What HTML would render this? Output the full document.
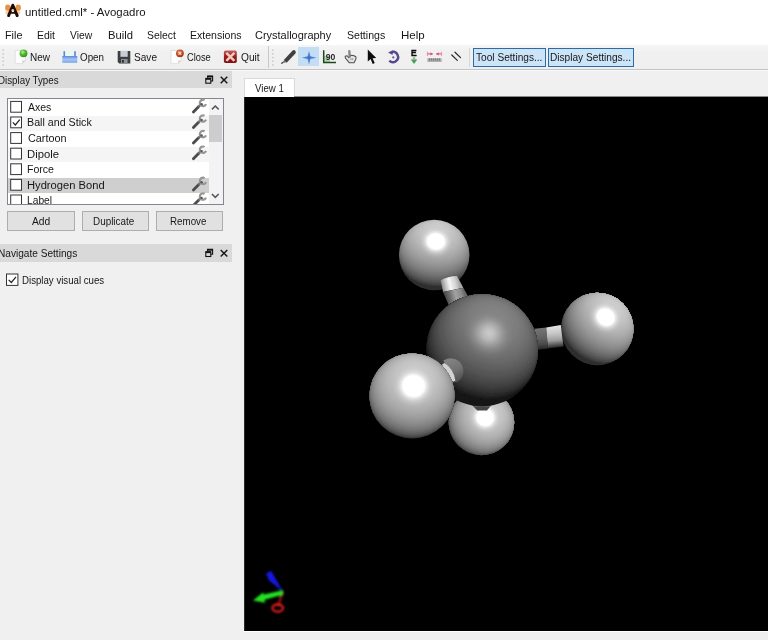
<!DOCTYPE html>
<html>
<head>
<meta charset="utf-8">
<title>untitled.cml* - Avogadro</title>
<style>
html,body{margin:0;padding:0;}
body{width:768px;height:640px;overflow:hidden;background:#f0f0f0;position:relative;font-family:"Liberation Sans",sans-serif;font-size:10px;color:#000;}
.abs{position:absolute;}
.t{position:absolute;white-space:nowrap;line-height:1;transform-origin:0 0;}
#top{left:0;top:0;width:768px;height:45px;background:#fff;}
#toolbar{left:0;top:45px;width:768px;height:24px;background:linear-gradient(#f6f6f6,#f0f0f0 30%,#efefef);border-bottom:1px solid #c4c4c4;}
.dock{left:0;width:232px;background:#d9d9d9;}
#list{left:7px;top:98px;width:215px;height:105px;background:#fff;border:1px solid #82878f;overflow:hidden;}
.row{position:absolute;left:0;width:201px;}
.cb{position:absolute;width:10px;height:10px;border:1px solid #333;background:#fff;}
.btn{position:absolute;top:211px;height:17.5px;background:#e1e1e1;border:1px solid #adadad;}
#gl{left:244px;top:97px;width:524px;height:534px;background:#000;border-left:1px solid #2a2a2a;box-sizing:border-box;}
.tsel{position:absolute;top:48px;height:16.8px;background:#cce4f7;border:1px solid #2c6ca6;box-sizing:content-box;}
</style>
</head>
<body>
<div id="top" class="abs"></div>
<div id="toolbar" class="abs"></div>
<div class="abs" style="left:0;top:70px;width:768px;height:1px;background:#f8f8f8;"></div>

<!-- dock titles -->
<div class="abs dock" style="top:70.5px;height:17px;"></div>
<div class="abs dock" style="top:244px;height:17.5px;"></div>

<!-- list -->
<div id="list" class="abs">
  <div class="row" style="top:16.5px;height:15.6px;background:#f5f5f5;"></div>
  <div class="row" style="top:47.7px;height:15.6px;background:#f5f5f5;"></div>
  <div class="row" style="top:78.9px;height:15.6px;background:#cfcfcf;"></div>
  <div class="abs" style="left:200.5px;top:0;width:14.5px;height:105px;background:#f3f3f3;"></div>
  <div class="abs" style="left:200.5px;top:16px;width:13.5px;height:27.2px;background:#cdcdcd;"></div>
</div>
<div class="btn" style="left:7px;width:65.5px;"></div>
<div class="btn" style="left:82px;width:65px;"></div>
<div class="btn" style="left:156px;width:65px;"></div>

<!-- tab + gl -->
<div class="abs" style="left:244px;top:78px;width:49px;height:19px;background:#fff;border:1px solid #d9d9d9;border-bottom:none;"></div>
<div class="abs" style="left:294px;top:96px;width:474px;height:1px;background:#8a8a8a;"></div>
<div id="gl" class="abs"></div>
<div class="abs" style="left:244px;top:631px;width:524px;height:1px;background:#fff;"></div>

<!-- tool buttons -->
<div class="abs" style="left:298px;top:47px;width:21px;height:19px;background:#c3ddf4;"></div>
<div class="tsel" style="left:473px;width:70.8px;"></div>
<div class="tsel" style="left:548px;width:83.6px;"></div>
<div class="abs" style="left:267.5px;top:46px;width:1px;height:22px;background:#c8c8c8;"></div>
<div class="abs" style="left:469px;top:48px;width:1px;height:19px;background:#d8d8d8;"></div>
<svg class="abs" style="left:0;top:0;" width="768" height="320" viewBox="0 0 768 320">
<defs>
  <radialGradient id="gball" cx="0.4" cy="0.35" r="0.7"><stop offset="0" stop-color="#b8f08a"/><stop offset="0.45" stop-color="#4fc02f"/><stop offset="1" stop-color="#2f8a1c"/></radialGradient>
  <radialGradient id="rball" cx="0.4" cy="0.35" r="0.7"><stop offset="0" stop-color="#e88a60"/><stop offset="0.5" stop-color="#c4502a"/><stop offset="1" stop-color="#9a3516"/></radialGradient>
  <linearGradient id="quitg" x1="0" y1="0" x2="0" y2="1"><stop offset="0" stop-color="#c86060"/><stop offset="0.45" stop-color="#9c2020"/><stop offset="1" stop-color="#7c0e0e"/></linearGradient>
  <linearGradient id="openg" x1="0" y1="0" x2="0" y2="1"><stop offset="0" stop-color="#5688d8"/><stop offset="0.3" stop-color="#86b0ee"/><stop offset="0.55" stop-color="#a2c4f6"/><stop offset="1" stop-color="#78a4e8"/></linearGradient>
  <filter id="b3" x="-20%" y="-20%" width="140%" height="140%"><feGaussianBlur stdDeviation="0.35"/></filter>
  <filter id="b5" x="-20%" y="-20%" width="140%" height="140%"><feGaussianBlur stdDeviation="0.5"/></filter>
  <filter id="b6" x="-20%" y="-20%" width="140%" height="140%"><feGaussianBlur stdDeviation="0.6"/></filter>
</defs>

<!-- app icon -->
<g filter="url(#b6)">
  <ellipse cx="7.8" cy="7.8" rx="2.7" ry="3.3" fill="#e89444"/>
  <ellipse cx="18.2" cy="7.8" rx="2.7" ry="3.3" fill="#e89444"/>
  <ellipse cx="7.2" cy="12.6" rx="1.8" ry="2" fill="#f6cfa6"/>
  <ellipse cx="18.6" cy="12.6" rx="1.8" ry="2" fill="#f6cfa6"/>
  <path d="M9.6 9.5 L12.8 5 L16 9.5 Z" fill="#8a4a20"/>
  <path d="M8.6 15.6 L12.8 5.2 L17.2 15.6" fill="none" stroke="#1c0c06" stroke-width="2.9" stroke-linejoin="round" stroke-linecap="round"/>
  <path d="M10 12.9 H15.6" stroke="#1c0c06" stroke-width="1.7"/>
  <circle cx="12.8" cy="10.2" r="1.3" fill="#f4c8a4"/>
</g>

<!-- toolbar handles -->
<g fill="#bdbdbd">
  <rect x="2.5" y="49.5" width="1.3" height="1.3"/><rect x="2.5" y="53.2" width="1.3" height="1.3"/><rect x="2.5" y="56.9" width="1.3" height="1.3"/><rect x="2.5" y="60.6" width="1.3" height="1.3"/><rect x="2.5" y="64.3" width="1.3" height="1.3"/>
  <rect x="272.2" y="49.5" width="1.3" height="1.3"/><rect x="272.2" y="53.2" width="1.3" height="1.3"/><rect x="272.2" y="56.9" width="1.3" height="1.3"/><rect x="272.2" y="60.6" width="1.3" height="1.3"/><rect x="272.2" y="64.3" width="1.3" height="1.3"/>
</g>

<!-- New -->
<g filter="url(#b3)">
  <path d="M15.2 50.4 H25.5 V60.5 L22.3 63.6 H15.2 Z" fill="#fdfdfd" stroke="#dadada" stroke-width="0.8"/>
  <path d="M25.5 60.5 L22.3 63.6 V60.5 Z" fill="#cfcfcf"/>
  <circle cx="23.5" cy="53.3" r="3.9" fill="url(#gball)"/>
</g>
<!-- Open -->
<g filter="url(#b3)">
  <rect x="65" y="50.4" width="9.3" height="5.9" fill="#eaf6fa"/>
  <rect x="67.5" y="51.5" width="3.5" height="3" fill="#f4f6d8" opacity="0.8"/>
  <rect x="63.5" y="51.2" width="1.6" height="5.2" fill="#5f86cc"/>
  <rect x="74.2" y="51.2" width="1.6" height="5.2" fill="#5f86cc"/>
  <rect x="62.3" y="56" width="15" height="6.8" fill="url(#openg)"/>
</g>
<!-- Save -->
<g filter="url(#b3)">
  <path d="M117.7 50.9 H130.3 V63.4 H119.2 L117.7 61.9 Z" fill="#3e4042"/>
  <rect x="120.4" y="50.9" width="7.3" height="5.9" fill="#c9ced6"/>
  <rect x="121" y="59" width="6.6" height="4.4" fill="#8d9094"/>
  <rect x="122" y="60" width="1.8" height="2.6" fill="#2c2c2c"/>
</g>
<!-- Close -->
<g filter="url(#b3)">
  <path d="M171 50.4 H181.3 V60.5 L178.1 63.6 H171 Z" fill="#fdfdfd" stroke="#dadada" stroke-width="0.8"/>
  <path d="M181.3 60.5 L178.1 63.6 V60.5 Z" fill="#d8cfc0"/>
  <circle cx="179.9" cy="53.3" r="3.9" fill="url(#rball)"/>
  <path d="M178.5 51.9 L181.3 54.7 M181.3 51.9 L178.5 54.7" stroke="#f6ddd0" stroke-width="1.2"/>
</g>
<!-- Quit -->
<g filter="url(#b3)">
  <rect x="223.9" y="50.4" width="12.9" height="12.7" rx="1.8" fill="url(#quitg)"/>
  <path d="M226.3 52.8 L234.4 60.8 M234.4 52.8 L226.3 60.8" stroke="#f0cac2" stroke-width="2.4"/>
</g>

<!-- Pencil (draw tool) -->
<g filter="url(#b3)">
  <path d="M283.8 60 L292.2 50.9 Q293.8 49.4 295.3 50.8 Q296.6 52.2 295.2 53.8 L286.6 62.7 Z" fill="#404040"/>
  <path d="M284.2 60.3 L286.2 62.3 L281.6 63.2 Z" fill="#6a6a6a"/>
  <path d="M282.6 62.4 L281.4 63.3 L282.9 63" stroke="#222" stroke-width="0.8" fill="#222"/>
</g>
<!-- Navigate star -->
<g filter="url(#b3)">
  <path d="M309 51 L310.4 56.3 L316.4 57.7 L310.4 59.1 L309 64.4 L307.6 59.1 L301.9 57.7 L307.6 56.3 Z" fill="#4d84d6"/>
  <circle cx="309" cy="57.7" r="1.6" fill="#3f73c8"/>
</g>
<!-- Measure L90 -->
<g filter="url(#b3)">
  <path d="M324.2 56 H330 V62 H324.2 Z" fill="#9fd0a0" opacity="0.8"/>
  <path d="M323.7 50.3 V62.6 H336" fill="none" stroke="#1d4a1d" stroke-width="1.5"/>
  <text x="325.7" y="60.3" font-family="Liberation Sans, sans-serif" font-size="8.6" font-weight="bold" fill="#2a2a2a" textLength="9.6" lengthAdjust="spacingAndGlyphs">90</text>
</g>
<!-- Hand -->
<g filter="url(#b3)">
  <path d="M345.2 56.6 Q346.4 55 348 56.6 L349 57.6 L350.6 55.2 L353.2 55.5 L355.7 56.6 Q356.5 58 355.6 59.8 L354 62.7 H349.2 L345.4 58 Z" fill="#e2e2e2" stroke="#505050" stroke-width="1.1" stroke-linejoin="round"/>
  <path d="M349.3 51.2 L349.7 56.6" stroke="#858585" stroke-width="2.3" stroke-linecap="round"/>
  <path d="M351 58.4 V60 M352.6 58.4 V60" stroke="#7a7a7a" stroke-width="0.8"/>
</g>
<!-- Arrow cursor -->
<g filter="url(#b3)">
  <path d="M367.8 49.6 V61.6 L370.6 59 L372.7 64 L374.7 63.1 L372.6 58.3 L376.2 58.1 Z" fill="#0a0a0a"/>
</g>
<!-- Rotate -->
<g filter="url(#b3)">
  <path d="M391.5 52.1 A5.1 5.1 0 1 1 389.3 60.6" fill="none" stroke="#58488e" stroke-width="2.4"/>
  <path d="M388 52.6 L393 50.2 L392.6 54.9 Z" fill="#58488e"/>
  <circle cx="393.3" cy="57.4" r="1.1" fill="#62539a"/>
</g>
<!-- E optimise -->
<g filter="url(#b3)">
  <text x="411" y="55.9" font-family="Liberation Sans, sans-serif" font-size="8.2" font-weight="bold" fill="#0c0c0c" stroke="#0c0c0c" stroke-width="0.45" textLength="5.6" lengthAdjust="spacingAndGlyphs">E</text>
  <path d="M412.9 57.4 H415.2 V59.6 H417.3 L414.05 63.9 L410.8 59.6 H412.9 Z" fill="#4a9e58"/>
  <path d="M413.3 58 H414.8 V60 H413.3 Z" fill="#8fd09a"/>
</g>
<!-- Align / measure -->
<g filter="url(#b3)">
  <path d="M427.2 53.9 H441.8" stroke="#e4698a" stroke-width="1.1" stroke-dasharray="5.6 3.4"/>
  <path d="M430.4 52.3 L432.8 53.9 L430.4 55.5 Z M438.6 52.3 L436.2 53.9 L438.6 55.5 Z" fill="#de4a70"/>
  <path d="M427.4 51.7 V56.1 M441.6 51.7 V56.1" stroke="#ea8aa4" stroke-width="0.9"/>
  <rect x="427.4" y="58.3" width="14.2" height="3.6" fill="#a9a9a9"/>
  <path d="M429.4 58.3 V60.6 M431.4 58.3 V60.6 M433.4 58.3 V60.6 M435.4 58.3 V60.6 M437.4 58.3 V60.6 M439.4 58.3 V60.6" stroke="#6c6c6c" stroke-width="0.8"/>
</g>
<!-- two lines -->
<g filter="url(#b3)">
  <path d="M451.8 55 L457.3 60.4 M455 52.2 L460.5 57.6" stroke="#2c2c2c" stroke-width="1.25" stroke-linecap="round"/>
</g>

<!-- dock title buttons -->
<g fill="none" stroke="#111" stroke-width="1.1">
  <path d="M207.6 77.8 V76 H212.6 V81 H210.8"/>
  <path d="M207.6 76.6 H212.6" stroke-width="1.6"/>
  <rect x="205.8" y="78.4" width="5" height="4.8"/>
  <path d="M205.8 79 H210.8" stroke-width="1.6"/>
  <path d="M220.7 76.7 L227.3 83.2 M227.3 76.7 L220.7 83.2" stroke-width="1.4"/>
</g>
<g fill="none" stroke="#111" stroke-width="1.1" transform="translate(0,173.3)">
  <path d="M207.6 77.8 V76 H212.6 V81 H210.8"/>
  <path d="M207.6 76.6 H212.6" stroke-width="1.6"/>
  <rect x="205.8" y="78.4" width="5" height="4.8"/>
  <path d="M205.8 79 H210.8" stroke-width="1.6"/>
  <path d="M220.7 76.7 L227.3 83.2 M227.3 76.7 L220.7 83.2" stroke-width="1.4"/>
</g>

<!-- scrollbar arrows -->
<path d="M211.9 109.4 L215.3 106 L218.7 109.4" fill="none" stroke="#555" stroke-width="1.5"/>
<path d="M211.9 194 L215.3 197.4 L218.7 194" fill="none" stroke="#555" stroke-width="1.5"/>

<!-- checkboxes -->
<g fill="#fff" stroke="#333" stroke-width="1">
  <rect x="10.7" y="101.4" width="10.8" height="10.8"/>
  <rect x="10.7" y="117" width="10.8" height="10.8"/>
  <rect x="10.7" y="132.6" width="10.8" height="10.8"/>
  <rect x="10.7" y="148.2" width="10.8" height="10.8"/>
  <rect x="10.7" y="163.8" width="10.8" height="10.8"/>
  <rect x="10.7" y="179.4" width="10.8" height="10.8"/>
  <rect x="10.7" y="195" width="10.8" height="10.8"/>
  <rect x="6.5" y="274" width="11.4" height="11.4"/>
</g>
<path d="M12.8 122.4 L15.3 125 L19.8 119.6" fill="none" stroke="#222" stroke-width="1.2"/>
<path d="M8.7 279.8 L11.3 282.5 L16 276.9" fill="none" stroke="#222" stroke-width="1.2"/>

<!-- wrenches -->
<defs>
<g id="wr">
  <path d="M1.4 10.6 L6.3 5.6" stroke="#4c4c4c" stroke-width="2.8" stroke-linecap="round"/>
  <path d="M6.3 5.6 L8.4 3.6" stroke="#6e6e6e" stroke-width="2.6"/>
  <path d="M12.6 -1.2 A3.2 3.2 0 1 0 14 2.8" fill="none" stroke="#969696" stroke-width="2.2"/>
  <circle cx="9.6" cy="3" r="1.2" fill="#555"/>
</g>
</defs>
<g filter="url(#b5)">
<use href="#wr" x="192" y="101.3"/>
<use href="#wr" x="192" y="116.9"/>
<use href="#wr" x="192" y="132.5"/>
<use href="#wr" x="192" y="148.1"/>
<use href="#wr" x="192" y="179.3"/>
<use href="#wr" x="192" y="194.9"/>
</g>
</svg>
<svg class="abs" style="left:244px;top:97px;" width="524" height="534" viewBox="244 97 524 534">
<defs>
<radialGradient id="gh1" gradientUnits="userSpaceOnUse" cx="436.0" cy="241.0" r="49.4"><stop offset="0" stop-color="#d6d6d6"/><stop offset="0.2" stop-color="#c2c2c2"/><stop offset="0.4" stop-color="#a8a8a8"/><stop offset="0.6" stop-color="#8a8a8a"/><stop offset="0.78" stop-color="#626262"/><stop offset="0.92" stop-color="#3e3e3e"/><stop offset="1" stop-color="#242424"/></radialGradient>
<radialGradient id="gh2" gradientUnits="userSpaceOnUse" cx="606.0" cy="316.8" r="51.2"><stop offset="0" stop-color="#d6d6d6"/><stop offset="0.2" stop-color="#c2c2c2"/><stop offset="0.4" stop-color="#a8a8a8"/><stop offset="0.6" stop-color="#8a8a8a"/><stop offset="0.78" stop-color="#626262"/><stop offset="0.92" stop-color="#3e3e3e"/><stop offset="1" stop-color="#242424"/></radialGradient>
<radialGradient id="gh3" gradientUnits="userSpaceOnUse" cx="413.7" cy="385.6" r="53.1"><stop offset="0" stop-color="#d6d6d6"/><stop offset="0.2" stop-color="#c2c2c2"/><stop offset="0.4" stop-color="#a8a8a8"/><stop offset="0.6" stop-color="#8a8a8a"/><stop offset="0.78" stop-color="#626262"/><stop offset="0.92" stop-color="#3e3e3e"/><stop offset="1" stop-color="#242424"/></radialGradient>
<radialGradient id="gh4" gradientUnits="userSpaceOnUse" cx="485.2" cy="417.2" r="39.2"><stop offset="0" stop-color="#d6d6d6"/><stop offset="0.2" stop-color="#c2c2c2"/><stop offset="0.4" stop-color="#a8a8a8"/><stop offset="0.6" stop-color="#8a8a8a"/><stop offset="0.78" stop-color="#626262"/><stop offset="0.92" stop-color="#3e3e3e"/><stop offset="1" stop-color="#242424"/></radialGradient>
<radialGradient id="gc" gradientUnits="userSpaceOnUse" cx="489.0" cy="333.4" r="74.3"><stop offset="0" stop-color="#b2b2b2"/><stop offset="0.07" stop-color="#aaaaaa"/><stop offset="0.15" stop-color="#929292"/><stop offset="0.24" stop-color="#7c7c7c"/><stop offset="0.34" stop-color="#6e6e6e"/><stop offset="0.5" stop-color="#5e5e5e"/><stop offset="0.68" stop-color="#4a4a4a"/><stop offset="0.85" stop-color="#363636"/><stop offset="0.95" stop-color="#282828"/><stop offset="1" stop-color="#1c1c1c"/></radialGradient>

  <radialGradient id="sp"><stop offset="0" stop-color="#fff" stop-opacity="1"/><stop offset="0.5" stop-color="#fff" stop-opacity="0.96"/><stop offset="0.72" stop-color="#fff" stop-opacity="0.5"/><stop offset="1" stop-color="#fff" stop-opacity="0"/></radialGradient>
  <linearGradient id="b1L" gradientUnits="userSpaceOnUse" x1="440.6" y1="284" x2="458.5" y2="280"><stop offset="0" stop-color="#7c7c7c"/><stop offset="0.2" stop-color="#b8b8b8"/><stop offset="0.48" stop-color="#f6f6f6"/><stop offset="0.8" stop-color="#d2d2d2"/><stop offset="1" stop-color="#a8a8a8"/></linearGradient>
  <linearGradient id="b1D" gradientUnits="userSpaceOnUse" x1="445" y1="297" x2="464" y2="292"><stop offset="0" stop-color="#484848"/><stop offset="0.25" stop-color="#6c6c6c"/><stop offset="0.55" stop-color="#a2a2a2"/><stop offset="0.85" stop-color="#8a8a8a"/><stop offset="1" stop-color="#6a6a6a"/></linearGradient>
  <linearGradient id="b2L" gradientUnits="userSpaceOnUse" x1="555" y1="326" x2="557" y2="348"><stop offset="0" stop-color="#e4e4e4"/><stop offset="0.35" stop-color="#c4c4c4"/><stop offset="0.65" stop-color="#9c9c9c"/><stop offset="0.88" stop-color="#4c4c4c"/><stop offset="1" stop-color="#1c1c1c"/></linearGradient>
  <linearGradient id="b2D" gradientUnits="userSpaceOnUse" x1="540" y1="328" x2="542" y2="350.5"><stop offset="0" stop-color="#747474"/><stop offset="0.4" stop-color="#646464"/><stop offset="0.7" stop-color="#4c4c4c"/><stop offset="1" stop-color="#1e1e1e"/></linearGradient>
  <linearGradient id="b3D" gradientUnits="userSpaceOnUse" x1="450" y1="360" x2="460" y2="380"><stop offset="0" stop-color="#828282"/><stop offset="0.5" stop-color="#727272"/><stop offset="1" stop-color="#505050"/></linearGradient>
  <filter id="ab" x="-20%" y="-20%" width="140%" height="140%"><feGaussianBlur stdDeviation="0.9"/></filter>
  <filter id="mb" x="-5%" y="-5%" width="110%" height="110%"><feGaussianBlur stdDeviation="0.55"/></filter>
</defs>
<g filter="url(#mb)">
  <!-- H4 (bottom, behind C) -->
  <clipPath id="cph4"><circle cx="481.4" cy="422.4" r="32.8"/></clipPath>
<g clip-path="url(#cph4)">
<circle cx="481.4" cy="422.4" r="33.8" fill="#2e2e2e"/>
<g transform="translate(481.4,422.4) rotate(-53.84)">
<ellipse cx="-4.42" cy="0" rx="28.36" ry="30.73" fill="#2e2e2e"/><rect x="-29.81" y="-33.8" width="64.61" height="67.6" fill="#2e2e2e"/>
<ellipse cx="-4.12" cy="0" rx="28.62" ry="31.01" fill="#343434"/><rect x="-27.76" y="-33.8" width="62.56" height="67.6" fill="#343434"/>
<ellipse cx="-3.81" cy="0" rx="28.86" ry="31.27" fill="#383838"/><rect x="-25.71" y="-33.8" width="60.51" height="67.6" fill="#383838"/>
<ellipse cx="-3.51" cy="0" rx="29.08" ry="31.51" fill="#3c3c3c"/><rect x="-23.65" y="-33.8" width="58.45" height="67.6" fill="#3c3c3c"/>
<ellipse cx="-3.20" cy="0" rx="29.28" ry="31.73" fill="#404040"/><rect x="-21.60" y="-33.8" width="56.40" height="67.6" fill="#404040"/>
<ellipse cx="-2.90" cy="0" rx="29.46" ry="31.92" fill="#444444"/><rect x="-19.55" y="-33.8" width="54.35" height="67.6" fill="#444444"/>
<ellipse cx="-2.59" cy="0" rx="29.63" ry="32.10" fill="#484848"/><rect x="-17.49" y="-33.8" width="52.29" height="67.6" fill="#484848"/>
<ellipse cx="-2.29" cy="0" rx="29.77" ry="32.26" fill="#4b4b4b"/><rect x="-15.44" y="-33.8" width="50.24" height="67.6" fill="#4b4b4b"/>
<ellipse cx="-1.98" cy="0" rx="29.89" ry="32.39" fill="#4e4e4e"/><rect x="-13.39" y="-33.8" width="48.19" height="67.6" fill="#4e4e4e"/>
<ellipse cx="-1.68" cy="0" rx="30.00" ry="32.51" fill="#525252"/><rect x="-11.33" y="-33.8" width="46.13" height="67.6" fill="#525252"/>
<ellipse cx="-1.38" cy="0" rx="30.09" ry="32.60" fill="#555555"/><rect x="-9.28" y="-33.8" width="44.08" height="67.6" fill="#555555"/>
<ellipse cx="-1.07" cy="0" rx="30.16" ry="32.68" fill="#585858"/><rect x="-7.23" y="-33.8" width="42.03" height="67.6" fill="#585858"/>
<ellipse cx="-0.77" cy="0" rx="30.21" ry="32.74" fill="#5b5b5b"/><rect x="-5.17" y="-33.8" width="39.97" height="67.6" fill="#5b5b5b"/>
<ellipse cx="-0.46" cy="0" rx="30.25" ry="32.78" fill="#5e5e5e"/><rect x="-3.12" y="-33.8" width="37.92" height="67.6" fill="#5e5e5e"/>
<ellipse cx="-0.16" cy="0" rx="30.27" ry="32.80" fill="#616161"/><rect x="-1.06" y="-33.8" width="35.86" height="67.6" fill="#616161"/>
<ellipse cx="0.15" cy="0" rx="30.27" ry="32.80" fill="#646464"/><rect x="0.99" y="-33.8" width="33.81" height="67.6" fill="#646464"/>
<ellipse cx="0.45" cy="0" rx="30.25" ry="32.78" fill="#676767"/><rect x="3.04" y="-33.8" width="31.76" height="67.6" fill="#676767"/>
<ellipse cx="0.76" cy="0" rx="30.22" ry="32.74" fill="#6a6a6a"/><rect x="5.10" y="-33.8" width="29.70" height="67.6" fill="#6a6a6a"/>
<ellipse cx="1.06" cy="0" rx="30.16" ry="32.68" fill="#6d6d6d"/><rect x="7.15" y="-33.8" width="27.65" height="67.6" fill="#6d6d6d"/>
<ellipse cx="1.36" cy="0" rx="30.09" ry="32.61" fill="#707070"/><rect x="9.20" y="-33.8" width="25.60" height="67.6" fill="#707070"/>
<ellipse cx="1.67" cy="0" rx="30.01" ry="32.51" fill="#737373"/><rect x="11.26" y="-33.8" width="23.54" height="67.6" fill="#737373"/>
<ellipse cx="1.97" cy="0" rx="29.90" ry="32.40" fill="#767676"/><rect x="13.31" y="-33.8" width="21.49" height="67.6" fill="#767676"/>
<ellipse cx="2.28" cy="0" rx="29.77" ry="32.26" fill="#797979"/><rect x="15.36" y="-33.8" width="19.44" height="67.6" fill="#797979"/>
<ellipse cx="2.58" cy="0" rx="29.63" ry="32.11" fill="#7b7b7b"/><rect x="17.42" y="-33.8" width="17.38" height="67.6" fill="#7b7b7b"/>
<ellipse cx="2.89" cy="0" rx="29.47" ry="31.93" fill="#7e7e7e"/><rect x="19.47" y="-33.8" width="15.33" height="67.6" fill="#7e7e7e"/>
<ellipse cx="3.19" cy="0" rx="29.29" ry="31.74" fill="#818181"/><rect x="21.52" y="-33.8" width="13.28" height="67.6" fill="#818181"/>
<ellipse cx="3.50" cy="0" rx="29.09" ry="31.52" fill="#848484"/><rect x="23.58" y="-33.8" width="11.22" height="67.6" fill="#848484"/>
<ellipse cx="3.80" cy="0" rx="28.87" ry="31.28" fill="#868686"/><rect x="25.63" y="-33.8" width="9.17" height="67.6" fill="#868686"/>
<ellipse cx="4.10" cy="0" rx="28.63" ry="31.02" fill="#898989"/><rect x="27.68" y="-33.8" width="7.12" height="67.6" fill="#898989"/>
<ellipse cx="4.41" cy="0" rx="28.37" ry="30.74" fill="#8c8c8c"/><rect x="29.74" y="-33.8" width="5.06" height="67.6" fill="#8c8c8c"/>
<ellipse cx="4.71" cy="0" rx="28.08" ry="30.43" fill="#8e8e8e"/><rect x="31.79" y="-33.8" width="3.01" height="67.6" fill="#8e8e8e"/>
<ellipse cx="5.02" cy="0" rx="27.78" ry="30.10" fill="#919191"/>
<ellipse cx="5.32" cy="0" rx="27.45" ry="29.75" fill="#939393"/>
<ellipse cx="5.63" cy="0" rx="27.10" ry="29.36" fill="#969696"/>
<ellipse cx="5.93" cy="0" rx="26.72" ry="28.96" fill="#999999"/>
<ellipse cx="6.24" cy="0" rx="26.32" ry="28.52" fill="#9b9b9b"/>
<ellipse cx="6.54" cy="0" rx="25.90" ry="28.06" fill="#9e9e9e"/>
<ellipse cx="6.85" cy="0" rx="25.44" ry="27.57" fill="#a0a0a0"/>
<ellipse cx="7.15" cy="0" rx="24.95" ry="27.04" fill="#a3a3a3"/>
<ellipse cx="7.45" cy="0" rx="24.44" ry="26.48" fill="#a5a5a5"/>
<ellipse cx="7.76" cy="0" rx="23.89" ry="25.88" fill="#a8a8a8"/>
<ellipse cx="8.06" cy="0" rx="23.30" ry="25.25" fill="#aaaaaa"/>
<ellipse cx="8.37" cy="0" rx="22.67" ry="24.57" fill="#adadad"/>
<ellipse cx="8.67" cy="0" rx="22.01" ry="23.85" fill="#afafaf"/>
<ellipse cx="8.98" cy="0" rx="21.29" ry="23.07" fill="#b2b2b2"/>
<ellipse cx="9.28" cy="0" rx="20.53" ry="22.25" fill="#b4b4b4"/>
<ellipse cx="9.59" cy="0" rx="19.71" ry="21.36" fill="#b7b7b7"/>
<ellipse cx="9.89" cy="0" rx="18.83" ry="20.40" fill="#b9b9b9"/>
<ellipse cx="10.19" cy="0" rx="17.87" ry="19.36" fill="#bbbbbb"/>
<ellipse cx="10.50" cy="0" rx="16.83" ry="18.23" fill="#bebebe"/>
<ellipse cx="10.80" cy="0" rx="15.68" ry="16.99" fill="#c0c0c0"/>
<ellipse cx="11.11" cy="0" rx="14.41" ry="15.61" fill="#c3c3c3"/>
<ellipse cx="11.41" cy="0" rx="12.97" ry="14.05" fill="#c5c5c5"/>
<ellipse cx="11.72" cy="0" rx="11.30" ry="12.25" fill="#c7c7c7"/>
<ellipse cx="12.02" cy="0" rx="9.29" ry="10.06" fill="#cacaca"/>
<ellipse cx="12.33" cy="0" rx="6.61" ry="7.16" fill="#cccccc"/>
<ellipse cx="12.63" cy="0" rx="0.01" ry="0.01" fill="#cfcfcf"/>
</g>
<g transform="translate(481.4,422.4) rotate(-53.84)">
<ellipse cx="5.32" cy="0" rx="18.16" ry="18.52" fill="#fff" fill-opacity="0.010"/>
<ellipse cx="5.40" cy="0" rx="17.49" ry="17.84" fill="#fff" fill-opacity="0.006"/>
<ellipse cx="5.49" cy="0" rx="16.81" ry="17.14" fill="#fff" fill-opacity="0.010"/>
<ellipse cx="5.57" cy="0" rx="16.12" ry="16.44" fill="#fff" fill-opacity="0.015"/>
<ellipse cx="5.65" cy="0" rx="15.42" ry="15.73" fill="#fff" fill-opacity="0.022"/>
<ellipse cx="5.73" cy="0" rx="14.71" ry="15.00" fill="#fff" fill-opacity="0.031"/>
<ellipse cx="5.80" cy="0" rx="13.99" ry="14.27" fill="#fff" fill-opacity="0.045"/>
<ellipse cx="5.87" cy="0" rx="13.26" ry="13.52" fill="#fff" fill-opacity="0.063"/>
<ellipse cx="5.93" cy="0" rx="12.52" ry="12.77" fill="#fff" fill-opacity="0.089"/>
<ellipse cx="5.99" cy="0" rx="11.78" ry="12.01" fill="#fff" fill-opacity="0.124"/>
<ellipse cx="6.05" cy="0" rx="11.03" ry="11.25" fill="#fff" fill-opacity="0.177"/>
<ellipse cx="6.10" cy="0" rx="10.27" ry="10.47" fill="#fff" fill-opacity="0.262"/>
<ellipse cx="6.15" cy="0" rx="9.50" ry="9.69" fill="#fff" fill-opacity="0.421"/>
<ellipse cx="6.20" cy="0" rx="8.73" ry="8.91" fill="#fff" fill-opacity="0.839"/>
<ellipse cx="6.24" cy="0" rx="7.96" ry="8.11" fill="#fff" fill-opacity="1.000"/>
</g>
</g>

  <path d="M470 403 L477.3 410.4 H487 L493 403 Z" fill="#444"/>
  <path d="M474 406.2 H490" stroke="#5e5e5e" stroke-width="1.6"/>
  <!-- H1, H2 -->
  <clipPath id="cph1"><circle cx="434.2" cy="255.0" r="35.3"/></clipPath>
<g clip-path="url(#cph1)">
<circle cx="434.2" cy="255.0" r="36.3" fill="#2e2e2e"/>
<g transform="translate(434.2,255.0) rotate(-82.67)">
<ellipse cx="-9.06" cy="0" rx="22.49" ry="33.07" fill="#2e2e2e"/><rect x="-16.86" y="-36.3" width="54.16" height="72.6" fill="#2e2e2e"/>
<ellipse cx="-8.43" cy="0" rx="22.70" ry="33.37" fill="#343434"/><rect x="-15.69" y="-36.3" width="52.99" height="72.6" fill="#343434"/>
<ellipse cx="-7.81" cy="0" rx="22.89" ry="33.65" fill="#383838"/><rect x="-14.53" y="-36.3" width="51.83" height="72.6" fill="#383838"/>
<ellipse cx="-7.19" cy="0" rx="23.07" ry="33.91" fill="#3c3c3c"/><rect x="-13.37" y="-36.3" width="50.67" height="72.6" fill="#3c3c3c"/>
<ellipse cx="-6.56" cy="0" rx="23.23" ry="34.15" fill="#404040"/><rect x="-12.21" y="-36.3" width="49.51" height="72.6" fill="#404040"/>
<ellipse cx="-5.94" cy="0" rx="23.37" ry="34.36" fill="#444444"/><rect x="-11.05" y="-36.3" width="48.35" height="72.6" fill="#444444"/>
<ellipse cx="-5.31" cy="0" rx="23.50" ry="34.55" fill="#484848"/><rect x="-9.89" y="-36.3" width="47.19" height="72.6" fill="#484848"/>
<ellipse cx="-4.69" cy="0" rx="23.61" ry="34.72" fill="#4b4b4b"/><rect x="-8.73" y="-36.3" width="46.03" height="72.6" fill="#4b4b4b"/>
<ellipse cx="-4.07" cy="0" rx="23.71" ry="34.86" fill="#4e4e4e"/><rect x="-7.57" y="-36.3" width="44.87" height="72.6" fill="#4e4e4e"/>
<ellipse cx="-3.44" cy="0" rx="23.80" ry="34.99" fill="#525252"/><rect x="-6.41" y="-36.3" width="43.71" height="72.6" fill="#525252"/>
<ellipse cx="-2.82" cy="0" rx="23.87" ry="35.09" fill="#555555"/><rect x="-5.25" y="-36.3" width="42.55" height="72.6" fill="#555555"/>
<ellipse cx="-2.19" cy="0" rx="23.93" ry="35.17" fill="#585858"/><rect x="-4.08" y="-36.3" width="41.38" height="72.6" fill="#585858"/>
<ellipse cx="-1.57" cy="0" rx="23.97" ry="35.23" fill="#5b5b5b"/><rect x="-2.92" y="-36.3" width="40.22" height="72.6" fill="#5b5b5b"/>
<ellipse cx="-0.95" cy="0" rx="24.00" ry="35.28" fill="#5e5e5e"/><rect x="-1.76" y="-36.3" width="39.06" height="72.6" fill="#5e5e5e"/>
<ellipse cx="-0.32" cy="0" rx="24.01" ry="35.30" fill="#616161"/><rect x="-0.60" y="-36.3" width="37.90" height="72.6" fill="#616161"/>
<ellipse cx="0.30" cy="0" rx="24.01" ry="35.30" fill="#646464"/><rect x="0.56" y="-36.3" width="36.74" height="72.6" fill="#646464"/>
<ellipse cx="0.92" cy="0" rx="24.00" ry="35.28" fill="#676767"/><rect x="1.72" y="-36.3" width="35.58" height="72.6" fill="#676767"/>
<ellipse cx="1.55" cy="0" rx="23.97" ry="35.24" fill="#6a6a6a"/><rect x="2.88" y="-36.3" width="34.42" height="72.6" fill="#6a6a6a"/>
<ellipse cx="2.17" cy="0" rx="23.93" ry="35.18" fill="#6d6d6d"/><rect x="4.04" y="-36.3" width="33.26" height="72.6" fill="#6d6d6d"/>
<ellipse cx="2.80" cy="0" rx="23.87" ry="35.09" fill="#707070"/><rect x="5.20" y="-36.3" width="32.10" height="72.6" fill="#707070"/>
<ellipse cx="3.42" cy="0" rx="23.80" ry="34.99" fill="#737373"/><rect x="6.36" y="-36.3" width="30.94" height="72.6" fill="#737373"/>
<ellipse cx="4.04" cy="0" rx="23.72" ry="34.87" fill="#767676"/><rect x="7.52" y="-36.3" width="29.78" height="72.6" fill="#767676"/>
<ellipse cx="4.67" cy="0" rx="23.62" ry="34.72" fill="#797979"/><rect x="8.69" y="-36.3" width="28.61" height="72.6" fill="#797979"/>
<ellipse cx="5.29" cy="0" rx="23.50" ry="34.55" fill="#7b7b7b"/><rect x="9.85" y="-36.3" width="27.45" height="72.6" fill="#7b7b7b"/>
<ellipse cx="5.91" cy="0" rx="23.38" ry="34.37" fill="#7e7e7e"/><rect x="11.01" y="-36.3" width="26.29" height="72.6" fill="#7e7e7e"/>
<ellipse cx="6.54" cy="0" rx="23.23" ry="34.15" fill="#818181"/><rect x="12.17" y="-36.3" width="25.13" height="72.6" fill="#818181"/>
<ellipse cx="7.16" cy="0" rx="23.07" ry="33.92" fill="#848484"/><rect x="13.33" y="-36.3" width="23.97" height="72.6" fill="#848484"/>
<ellipse cx="7.79" cy="0" rx="22.90" ry="33.66" fill="#868686"/><rect x="14.49" y="-36.3" width="22.81" height="72.6" fill="#868686"/>
<ellipse cx="8.41" cy="0" rx="22.71" ry="33.38" fill="#898989"/><rect x="15.65" y="-36.3" width="21.65" height="72.6" fill="#898989"/>
<ellipse cx="9.03" cy="0" rx="22.50" ry="33.08" fill="#8c8c8c"/><rect x="16.81" y="-36.3" width="20.49" height="72.6" fill="#8c8c8c"/>
<ellipse cx="9.66" cy="0" rx="22.28" ry="32.75" fill="#8e8e8e"/><rect x="17.97" y="-36.3" width="19.33" height="72.6" fill="#8e8e8e"/>
<ellipse cx="10.28" cy="0" rx="22.03" ry="32.39" fill="#919191"/><rect x="19.13" y="-36.3" width="18.17" height="72.6" fill="#919191"/>
<ellipse cx="10.90" cy="0" rx="21.78" ry="32.01" fill="#939393"/><rect x="20.29" y="-36.3" width="17.01" height="72.6" fill="#939393"/>
<ellipse cx="11.53" cy="0" rx="21.50" ry="31.60" fill="#969696"/><rect x="21.46" y="-36.3" width="15.84" height="72.6" fill="#969696"/>
<ellipse cx="12.15" cy="0" rx="21.20" ry="31.16" fill="#999999"/><rect x="22.62" y="-36.3" width="14.68" height="72.6" fill="#999999"/>
<ellipse cx="12.78" cy="0" rx="20.88" ry="30.70" fill="#9b9b9b"/><rect x="23.78" y="-36.3" width="13.52" height="72.6" fill="#9b9b9b"/>
<ellipse cx="13.40" cy="0" rx="20.54" ry="30.20" fill="#9e9e9e"/><rect x="24.94" y="-36.3" width="12.36" height="72.6" fill="#9e9e9e"/>
<ellipse cx="14.02" cy="0" rx="20.18" ry="29.67" fill="#a0a0a0"/><rect x="26.10" y="-36.3" width="11.20" height="72.6" fill="#a0a0a0"/>
<ellipse cx="14.65" cy="0" rx="19.79" ry="29.10" fill="#a3a3a3"/><rect x="27.26" y="-36.3" width="10.04" height="72.6" fill="#a3a3a3"/>
<ellipse cx="15.27" cy="0" rx="19.38" ry="28.50" fill="#a5a5a5"/><rect x="28.42" y="-36.3" width="8.88" height="72.6" fill="#a5a5a5"/>
<ellipse cx="15.89" cy="0" rx="18.95" ry="27.85" fill="#a8a8a8"/><rect x="29.58" y="-36.3" width="7.72" height="72.6" fill="#a8a8a8"/>
<ellipse cx="16.52" cy="0" rx="18.48" ry="27.17" fill="#aaaaaa"/><rect x="30.74" y="-36.3" width="6.56" height="72.6" fill="#aaaaaa"/>
<ellipse cx="17.14" cy="0" rx="17.99" ry="26.44" fill="#adadad"/><rect x="31.90" y="-36.3" width="5.40" height="72.6" fill="#adadad"/>
<ellipse cx="17.77" cy="0" rx="17.46" ry="25.66" fill="#afafaf"/><rect x="33.07" y="-36.3" width="4.23" height="72.6" fill="#afafaf"/>
<ellipse cx="18.39" cy="0" rx="16.89" ry="24.83" fill="#b2b2b2"/><rect x="34.23" y="-36.3" width="3.07" height="72.6" fill="#b2b2b2"/>
<ellipse cx="19.01" cy="0" rx="16.29" ry="23.94" fill="#b4b4b4"/>
<ellipse cx="19.64" cy="0" rx="15.64" ry="22.99" fill="#b7b7b7"/>
<ellipse cx="20.26" cy="0" rx="14.93" ry="21.96" fill="#b9b9b9"/>
<ellipse cx="20.89" cy="0" rx="14.18" ry="20.84" fill="#bbbbbb"/>
<ellipse cx="21.51" cy="0" rx="13.35" ry="19.62" fill="#bebebe"/>
<ellipse cx="22.13" cy="0" rx="12.44" ry="18.29" fill="#c0c0c0"/>
<ellipse cx="22.76" cy="0" rx="11.43" ry="16.80" fill="#c3c3c3"/>
<ellipse cx="23.38" cy="0" rx="10.29" ry="15.12" fill="#c5c5c5"/>
<ellipse cx="24.00" cy="0" rx="8.97" ry="13.18" fill="#c7c7c7"/>
<ellipse cx="24.63" cy="0" rx="7.37" ry="10.83" fill="#cacaca"/>
<ellipse cx="25.25" cy="0" rx="5.24" ry="7.70" fill="#cccccc"/>
<ellipse cx="25.88" cy="0" rx="0.01" ry="0.01" fill="#cfcfcf"/>
</g>
<g transform="translate(434.2,255.0) rotate(-82.67)">
<ellipse cx="11.65" cy="0" rx="18.27" ry="19.93" fill="#fff" fill-opacity="0.009"/>
<ellipse cx="11.85" cy="0" rx="17.60" ry="19.20" fill="#fff" fill-opacity="0.006"/>
<ellipse cx="12.03" cy="0" rx="16.91" ry="18.45" fill="#fff" fill-opacity="0.009"/>
<ellipse cx="12.21" cy="0" rx="16.22" ry="17.69" fill="#fff" fill-opacity="0.013"/>
<ellipse cx="12.39" cy="0" rx="15.51" ry="16.92" fill="#fff" fill-opacity="0.019"/>
<ellipse cx="12.55" cy="0" rx="14.80" ry="16.14" fill="#fff" fill-opacity="0.028"/>
<ellipse cx="12.71" cy="0" rx="14.07" ry="15.35" fill="#fff" fill-opacity="0.039"/>
<ellipse cx="12.86" cy="0" rx="13.34" ry="14.55" fill="#fff" fill-opacity="0.055"/>
<ellipse cx="13.00" cy="0" rx="12.60" ry="13.75" fill="#fff" fill-opacity="0.077"/>
<ellipse cx="13.13" cy="0" rx="11.85" ry="12.93" fill="#fff" fill-opacity="0.107"/>
<ellipse cx="13.26" cy="0" rx="11.09" ry="12.10" fill="#fff" fill-opacity="0.149"/>
<ellipse cx="13.38" cy="0" rx="10.33" ry="11.27" fill="#fff" fill-opacity="0.212"/>
<ellipse cx="13.48" cy="0" rx="9.56" ry="10.43" fill="#fff" fill-opacity="0.320"/>
<ellipse cx="13.58" cy="0" rx="8.79" ry="9.59" fill="#fff" fill-opacity="0.542"/>
<ellipse cx="13.68" cy="0" rx="8.00" ry="8.73" fill="#fff" fill-opacity="1.000"/>
</g>
</g>

  <clipPath id="cph2"><circle cx="597.3" cy="329.0" r="36.2"/></clipPath>
<g clip-path="url(#cph2)">
<circle cx="597.3" cy="329.0" r="37.2" fill="#2e2e2e"/>
<g transform="translate(597.3,329.0) rotate(-54.51)">
<ellipse cx="-9.55" cy="0" rx="22.29" ry="33.91" fill="#2e2e2e"/><rect x="-16.81" y="-37.2" width="55.01" height="74.4" fill="#2e2e2e"/>
<ellipse cx="-8.89" cy="0" rx="22.50" ry="34.22" fill="#343434"/><rect x="-15.65" y="-37.2" width="53.85" height="74.4" fill="#343434"/>
<ellipse cx="-8.23" cy="0" rx="22.69" ry="34.51" fill="#383838"/><rect x="-14.50" y="-37.2" width="52.70" height="74.4" fill="#383838"/>
<ellipse cx="-7.58" cy="0" rx="22.86" ry="34.78" fill="#3c3c3c"/><rect x="-13.34" y="-37.2" width="51.54" height="74.4" fill="#3c3c3c"/>
<ellipse cx="-6.92" cy="0" rx="23.02" ry="35.02" fill="#404040"/><rect x="-12.18" y="-37.2" width="50.38" height="74.4" fill="#404040"/>
<ellipse cx="-6.26" cy="0" rx="23.16" ry="35.23" fill="#444444"/><rect x="-11.02" y="-37.2" width="49.22" height="74.4" fill="#444444"/>
<ellipse cx="-5.60" cy="0" rx="23.29" ry="35.43" fill="#484848"/><rect x="-9.86" y="-37.2" width="48.06" height="74.4" fill="#484848"/>
<ellipse cx="-4.94" cy="0" rx="23.40" ry="35.60" fill="#4b4b4b"/><rect x="-8.71" y="-37.2" width="46.91" height="74.4" fill="#4b4b4b"/>
<ellipse cx="-4.29" cy="0" rx="23.50" ry="35.75" fill="#4e4e4e"/><rect x="-7.55" y="-37.2" width="45.75" height="74.4" fill="#4e4e4e"/>
<ellipse cx="-3.63" cy="0" rx="23.58" ry="35.88" fill="#525252"/><rect x="-6.39" y="-37.2" width="44.59" height="74.4" fill="#525252"/>
<ellipse cx="-2.97" cy="0" rx="23.65" ry="35.98" fill="#555555"/><rect x="-5.23" y="-37.2" width="43.43" height="74.4" fill="#555555"/>
<ellipse cx="-2.31" cy="0" rx="23.71" ry="36.07" fill="#585858"/><rect x="-4.07" y="-37.2" width="42.27" height="74.4" fill="#585858"/>
<ellipse cx="-1.66" cy="0" rx="23.75" ry="36.13" fill="#5b5b5b"/><rect x="-2.92" y="-37.2" width="41.12" height="74.4" fill="#5b5b5b"/>
<ellipse cx="-1.00" cy="0" rx="23.78" ry="36.18" fill="#5e5e5e"/><rect x="-1.76" y="-37.2" width="39.96" height="74.4" fill="#5e5e5e"/>
<ellipse cx="-0.34" cy="0" rx="23.79" ry="36.20" fill="#616161"/><rect x="-0.60" y="-37.2" width="38.80" height="74.4" fill="#616161"/>
<ellipse cx="0.32" cy="0" rx="23.79" ry="36.20" fill="#646464"/><rect x="0.56" y="-37.2" width="37.64" height="74.4" fill="#646464"/>
<ellipse cx="0.97" cy="0" rx="23.78" ry="36.18" fill="#676767"/><rect x="1.72" y="-37.2" width="36.48" height="74.4" fill="#676767"/>
<ellipse cx="1.63" cy="0" rx="23.75" ry="36.14" fill="#6a6a6a"/><rect x="2.87" y="-37.2" width="35.33" height="74.4" fill="#6a6a6a"/>
<ellipse cx="2.29" cy="0" rx="23.71" ry="36.07" fill="#6d6d6d"/><rect x="4.03" y="-37.2" width="34.17" height="74.4" fill="#6d6d6d"/>
<ellipse cx="2.95" cy="0" rx="23.66" ry="35.99" fill="#707070"/><rect x="5.19" y="-37.2" width="33.01" height="74.4" fill="#707070"/>
<ellipse cx="3.60" cy="0" rx="23.59" ry="35.88" fill="#737373"/><rect x="6.35" y="-37.2" width="31.85" height="74.4" fill="#737373"/>
<ellipse cx="4.26" cy="0" rx="23.50" ry="35.76" fill="#767676"/><rect x="7.51" y="-37.2" width="30.69" height="74.4" fill="#767676"/>
<ellipse cx="4.92" cy="0" rx="23.40" ry="35.61" fill="#797979"/><rect x="8.66" y="-37.2" width="29.54" height="74.4" fill="#797979"/>
<ellipse cx="5.58" cy="0" rx="23.29" ry="35.44" fill="#7b7b7b"/><rect x="9.82" y="-37.2" width="28.38" height="74.4" fill="#7b7b7b"/>
<ellipse cx="6.24" cy="0" rx="23.17" ry="35.24" fill="#7e7e7e"/><rect x="10.98" y="-37.2" width="27.22" height="74.4" fill="#7e7e7e"/>
<ellipse cx="6.89" cy="0" rx="23.02" ry="35.03" fill="#818181"/><rect x="12.14" y="-37.2" width="26.06" height="74.4" fill="#818181"/>
<ellipse cx="7.55" cy="0" rx="22.87" ry="34.79" fill="#848484"/><rect x="13.30" y="-37.2" width="24.90" height="74.4" fill="#848484"/>
<ellipse cx="8.21" cy="0" rx="22.69" ry="34.52" fill="#868686"/><rect x="14.45" y="-37.2" width="23.75" height="74.4" fill="#868686"/>
<ellipse cx="8.87" cy="0" rx="22.50" ry="34.23" fill="#898989"/><rect x="15.61" y="-37.2" width="22.59" height="74.4" fill="#898989"/>
<ellipse cx="9.52" cy="0" rx="22.30" ry="33.92" fill="#8c8c8c"/><rect x="16.77" y="-37.2" width="21.43" height="74.4" fill="#8c8c8c"/>
<ellipse cx="10.18" cy="0" rx="22.08" ry="33.58" fill="#8e8e8e"/><rect x="17.93" y="-37.2" width="20.27" height="74.4" fill="#8e8e8e"/>
<ellipse cx="10.84" cy="0" rx="21.84" ry="33.22" fill="#919191"/><rect x="19.09" y="-37.2" width="19.11" height="74.4" fill="#919191"/>
<ellipse cx="11.50" cy="0" rx="21.58" ry="32.83" fill="#939393"/><rect x="20.24" y="-37.2" width="17.96" height="74.4" fill="#939393"/>
<ellipse cx="12.15" cy="0" rx="21.30" ry="32.41" fill="#969696"/><rect x="21.40" y="-37.2" width="16.80" height="74.4" fill="#969696"/>
<ellipse cx="12.81" cy="0" rx="21.01" ry="31.96" fill="#999999"/><rect x="22.56" y="-37.2" width="15.64" height="74.4" fill="#999999"/>
<ellipse cx="13.47" cy="0" rx="20.69" ry="31.48" fill="#9b9b9b"/><rect x="23.72" y="-37.2" width="14.48" height="74.4" fill="#9b9b9b"/>
<ellipse cx="14.13" cy="0" rx="20.36" ry="30.97" fill="#9e9e9e"/><rect x="24.88" y="-37.2" width="13.32" height="74.4" fill="#9e9e9e"/>
<ellipse cx="14.79" cy="0" rx="20.00" ry="30.42" fill="#a0a0a0"/><rect x="26.03" y="-37.2" width="12.17" height="74.4" fill="#a0a0a0"/>
<ellipse cx="15.44" cy="0" rx="19.62" ry="29.84" fill="#a3a3a3"/><rect x="27.19" y="-37.2" width="11.01" height="74.4" fill="#a3a3a3"/>
<ellipse cx="16.10" cy="0" rx="19.21" ry="29.22" fill="#a5a5a5"/><rect x="28.35" y="-37.2" width="9.85" height="74.4" fill="#a5a5a5"/>
<ellipse cx="16.76" cy="0" rx="18.78" ry="28.56" fill="#a8a8a8"/><rect x="29.51" y="-37.2" width="8.69" height="74.4" fill="#a8a8a8"/>
<ellipse cx="17.42" cy="0" rx="18.32" ry="27.86" fill="#aaaaaa"/><rect x="30.67" y="-37.2" width="7.53" height="74.4" fill="#aaaaaa"/>
<ellipse cx="18.07" cy="0" rx="17.82" ry="27.12" fill="#adadad"/><rect x="31.82" y="-37.2" width="6.38" height="74.4" fill="#adadad"/>
<ellipse cx="18.73" cy="0" rx="17.30" ry="26.32" fill="#afafaf"/><rect x="32.98" y="-37.2" width="5.22" height="74.4" fill="#afafaf"/>
<ellipse cx="19.39" cy="0" rx="16.74" ry="25.47" fill="#b2b2b2"/><rect x="34.14" y="-37.2" width="4.06" height="74.4" fill="#b2b2b2"/>
<ellipse cx="20.05" cy="0" rx="16.14" ry="24.55" fill="#b4b4b4"/><rect x="35.30" y="-37.2" width="2.90" height="74.4" fill="#b4b4b4"/>
<ellipse cx="20.70" cy="0" rx="15.49" ry="23.57" fill="#b7b7b7"/>
<ellipse cx="21.36" cy="0" rx="14.80" ry="22.52" fill="#b9b9b9"/>
<ellipse cx="22.02" cy="0" rx="14.05" ry="21.37" fill="#bbbbbb"/>
<ellipse cx="22.68" cy="0" rx="13.23" ry="20.12" fill="#bebebe"/>
<ellipse cx="23.33" cy="0" rx="12.33" ry="18.75" fill="#c0c0c0"/>
<ellipse cx="23.99" cy="0" rx="11.33" ry="17.23" fill="#c3c3c3"/>
<ellipse cx="24.65" cy="0" rx="10.19" ry="15.51" fill="#c5c5c5"/>
<ellipse cx="25.31" cy="0" rx="8.88" ry="13.52" fill="#c7c7c7"/>
<ellipse cx="25.97" cy="0" rx="7.30" ry="11.10" fill="#cacaca"/>
<ellipse cx="26.62" cy="0" rx="5.19" ry="7.90" fill="#cccccc"/>
<ellipse cx="27.28" cy="0" rx="0.01" ry="0.01" fill="#cfcfcf"/>
</g>
<g transform="translate(597.3,329.0) rotate(-54.51)">
<ellipse cx="12.37" cy="0" rx="18.61" ry="20.44" fill="#fff" fill-opacity="0.008"/>
<ellipse cx="12.57" cy="0" rx="17.92" ry="19.69" fill="#fff" fill-opacity="0.006"/>
<ellipse cx="12.77" cy="0" rx="17.22" ry="18.92" fill="#fff" fill-opacity="0.009"/>
<ellipse cx="12.97" cy="0" rx="16.52" ry="18.14" fill="#fff" fill-opacity="0.013"/>
<ellipse cx="13.15" cy="0" rx="15.80" ry="17.36" fill="#fff" fill-opacity="0.019"/>
<ellipse cx="13.33" cy="0" rx="15.07" ry="16.56" fill="#fff" fill-opacity="0.027"/>
<ellipse cx="13.49" cy="0" rx="14.33" ry="15.75" fill="#fff" fill-opacity="0.039"/>
<ellipse cx="13.65" cy="0" rx="13.59" ry="14.93" fill="#fff" fill-opacity="0.055"/>
<ellipse cx="13.80" cy="0" rx="12.83" ry="14.10" fill="#fff" fill-opacity="0.076"/>
<ellipse cx="13.94" cy="0" rx="12.07" ry="13.26" fill="#fff" fill-opacity="0.105"/>
<ellipse cx="14.08" cy="0" rx="11.30" ry="12.41" fill="#fff" fill-opacity="0.146"/>
<ellipse cx="14.20" cy="0" rx="10.52" ry="11.56" fill="#fff" fill-opacity="0.209"/>
<ellipse cx="14.32" cy="0" rx="9.74" ry="10.70" fill="#fff" fill-opacity="0.312"/>
<ellipse cx="14.42" cy="0" rx="8.95" ry="9.83" fill="#fff" fill-opacity="0.524"/>
<ellipse cx="14.52" cy="0" rx="8.15" ry="8.96" fill="#fff" fill-opacity="1.000"/>
</g>
</g>

  <!-- bond C-H1 -->
  <path d="M440.6 280.2 Q448 276 457 275.9 L463.3 287.7 L443 292 Z" fill="url(#b1L)"/>
  <path d="M443 292 L463.3 287.7 L470 300 L450 308 Z" fill="url(#b1D)"/>
  <!-- bond C-H2 -->
  <path d="M530 329.2 L546.2 327.6 L548 348.6 L532 350.6 Z" fill="url(#b2D)"/>
  <path d="M546.2 327.6 L560.8 325.1 Q562 336 563.6 346.6 L548 348.6 Z" fill="url(#b2L)"/>
  <!-- C -->
  <clipPath id="cpc"><circle cx="482.0" cy="350.3" r="56.0"/></clipPath>
<g clip-path="url(#cpc)">
<circle cx="482.0" cy="350.3" r="57.0" fill="#131313"/>
<g transform="translate(482.0,350.3) rotate(-67.50)">
<ellipse cx="-5.19" cy="0" rx="43.55" ry="55.37" fill="#131313"/><rect x="-13.60" y="-57.0" width="71.60" height="114.0" fill="#131313"/>
<ellipse cx="-4.48" cy="0" rx="43.68" ry="55.53" fill="#161616"/><rect x="-11.74" y="-57.0" width="69.74" height="114.0" fill="#161616"/>
<ellipse cx="-3.77" cy="0" rx="43.79" ry="55.67" fill="#191919"/><rect x="-9.88" y="-57.0" width="67.88" height="114.0" fill="#191919"/>
<ellipse cx="-3.06" cy="0" rx="43.88" ry="55.78" fill="#1b1b1b"/><rect x="-8.02" y="-57.0" width="66.02" height="114.0" fill="#1b1b1b"/>
<ellipse cx="-2.35" cy="0" rx="43.95" ry="55.87" fill="#1e1e1e"/><rect x="-6.15" y="-57.0" width="64.15" height="114.0" fill="#1e1e1e"/>
<ellipse cx="-1.64" cy="0" rx="44.00" ry="55.94" fill="#202020"/><rect x="-4.29" y="-57.0" width="62.29" height="114.0" fill="#202020"/>
<ellipse cx="-0.93" cy="0" rx="44.03" ry="55.98" fill="#222222"/><rect x="-2.43" y="-57.0" width="60.43" height="114.0" fill="#222222"/>
<ellipse cx="-0.22" cy="0" rx="44.05" ry="56.00" fill="#252525"/><rect x="-0.57" y="-57.0" width="58.57" height="114.0" fill="#252525"/>
<ellipse cx="0.49" cy="0" rx="44.05" ry="55.99" fill="#272727"/><rect x="1.30" y="-57.0" width="56.70" height="114.0" fill="#272727"/>
<ellipse cx="1.20" cy="0" rx="44.02" ry="55.97" fill="#292929"/><rect x="3.16" y="-57.0" width="54.84" height="114.0" fill="#292929"/>
<ellipse cx="1.91" cy="0" rx="43.98" ry="55.91" fill="#2b2b2b"/><rect x="5.02" y="-57.0" width="52.98" height="114.0" fill="#2b2b2b"/>
<ellipse cx="2.62" cy="0" rx="43.92" ry="55.84" fill="#2e2e2e"/><rect x="6.88" y="-57.0" width="51.12" height="114.0" fill="#2e2e2e"/>
<ellipse cx="3.33" cy="0" rx="43.84" ry="55.74" fill="#303030"/><rect x="8.75" y="-57.0" width="49.25" height="114.0" fill="#303030"/>
<ellipse cx="4.04" cy="0" rx="43.75" ry="55.62" fill="#323232"/><rect x="10.61" y="-57.0" width="47.39" height="114.0" fill="#323232"/>
<ellipse cx="4.75" cy="0" rx="43.63" ry="55.47" fill="#343434"/><rect x="12.47" y="-57.0" width="45.53" height="114.0" fill="#343434"/>
<ellipse cx="5.46" cy="0" rx="43.50" ry="55.30" fill="#363636"/><rect x="14.33" y="-57.0" width="43.67" height="114.0" fill="#363636"/>
<ellipse cx="6.17" cy="0" rx="43.34" ry="55.10" fill="#383838"/><rect x="16.20" y="-57.0" width="41.80" height="114.0" fill="#383838"/>
<ellipse cx="6.88" cy="0" rx="43.17" ry="54.88" fill="#3a3a3a"/><rect x="18.06" y="-57.0" width="39.94" height="114.0" fill="#3a3a3a"/>
<ellipse cx="7.59" cy="0" rx="42.97" ry="54.63" fill="#3c3c3c"/><rect x="19.92" y="-57.0" width="38.08" height="114.0" fill="#3c3c3c"/>
<ellipse cx="8.30" cy="0" rx="42.76" ry="54.36" fill="#3f3f3f"/><rect x="21.78" y="-57.0" width="36.22" height="114.0" fill="#3f3f3f"/>
<ellipse cx="9.01" cy="0" rx="42.53" ry="54.06" fill="#414141"/><rect x="23.65" y="-57.0" width="34.35" height="114.0" fill="#414141"/>
<ellipse cx="9.73" cy="0" rx="42.27" ry="53.74" fill="#434343"/><rect x="25.51" y="-57.0" width="32.49" height="114.0" fill="#434343"/>
<ellipse cx="10.44" cy="0" rx="42.00" ry="53.39" fill="#454545"/><rect x="27.37" y="-57.0" width="30.63" height="114.0" fill="#454545"/>
<ellipse cx="11.15" cy="0" rx="41.70" ry="53.01" fill="#474747"/><rect x="29.23" y="-57.0" width="28.77" height="114.0" fill="#474747"/>
<ellipse cx="11.86" cy="0" rx="41.38" ry="52.61" fill="#494949"/><rect x="31.10" y="-57.0" width="26.90" height="114.0" fill="#494949"/>
<ellipse cx="12.57" cy="0" rx="41.04" ry="52.17" fill="#4b4b4b"/><rect x="32.96" y="-57.0" width="25.04" height="114.0" fill="#4b4b4b"/>
<ellipse cx="13.28" cy="0" rx="40.67" ry="51.71" fill="#4d4d4d"/><rect x="34.82" y="-57.0" width="23.18" height="114.0" fill="#4d4d4d"/>
<ellipse cx="13.99" cy="0" rx="40.29" ry="51.22" fill="#4f4f4f"/><rect x="36.68" y="-57.0" width="21.32" height="114.0" fill="#4f4f4f"/>
<ellipse cx="14.70" cy="0" rx="39.87" ry="50.69" fill="#515151"/><rect x="38.54" y="-57.0" width="19.46" height="114.0" fill="#515151"/>
<ellipse cx="15.41" cy="0" rx="39.44" ry="50.13" fill="#535353"/><rect x="40.41" y="-57.0" width="17.59" height="114.0" fill="#535353"/>
<ellipse cx="16.12" cy="0" rx="38.97" ry="49.55" fill="#555555"/><rect x="42.27" y="-57.0" width="15.73" height="114.0" fill="#555555"/>
<ellipse cx="16.83" cy="0" rx="38.48" ry="48.92" fill="#575757"/><rect x="44.13" y="-57.0" width="13.87" height="114.0" fill="#575757"/>
<ellipse cx="17.54" cy="0" rx="37.96" ry="48.26" fill="#585858"/><rect x="45.99" y="-57.0" width="12.01" height="114.0" fill="#585858"/>
<ellipse cx="18.25" cy="0" rx="37.42" ry="47.57" fill="#5a5a5a"/><rect x="47.86" y="-57.0" width="10.14" height="114.0" fill="#5a5a5a"/>
<ellipse cx="18.96" cy="0" rx="36.84" ry="46.83" fill="#5c5c5c"/><rect x="49.72" y="-57.0" width="8.28" height="114.0" fill="#5c5c5c"/>
<ellipse cx="19.67" cy="0" rx="36.23" ry="46.06" fill="#5e5e5e"/><rect x="51.58" y="-57.0" width="6.42" height="114.0" fill="#5e5e5e"/>
<ellipse cx="20.38" cy="0" rx="35.59" ry="45.24" fill="#606060"/><rect x="53.44" y="-57.0" width="4.56" height="114.0" fill="#606060"/>
<ellipse cx="21.09" cy="0" rx="34.91" ry="44.38" fill="#626262"/><rect x="55.31" y="-57.0" width="2.69" height="114.0" fill="#626262"/>
<ellipse cx="21.80" cy="0" rx="34.20" ry="43.47" fill="#646464"/>
<ellipse cx="22.51" cy="0" rx="33.44" ry="42.51" fill="#666666"/>
<ellipse cx="23.22" cy="0" rx="32.64" ry="41.50" fill="#686868"/>
<ellipse cx="23.93" cy="0" rx="31.80" ry="40.43" fill="#6a6a6a"/>
<ellipse cx="24.64" cy="0" rx="30.91" ry="39.29" fill="#6c6c6c"/>
<ellipse cx="25.35" cy="0" rx="29.96" ry="38.09" fill="#6e6e6e"/>
<ellipse cx="26.06" cy="0" rx="28.96" ry="36.81" fill="#6f6f6f"/>
<ellipse cx="26.77" cy="0" rx="27.89" ry="35.45" fill="#717171"/>
<ellipse cx="27.48" cy="0" rx="26.74" ry="34.00" fill="#737373"/>
<ellipse cx="28.19" cy="0" rx="25.51" ry="32.44" fill="#757575"/>
<ellipse cx="28.90" cy="0" rx="24.19" ry="30.75" fill="#777777"/>
<ellipse cx="29.61" cy="0" rx="22.75" ry="28.93" fill="#797979"/>
<ellipse cx="30.32" cy="0" rx="21.18" ry="26.93" fill="#7b7b7b"/>
<ellipse cx="31.03" cy="0" rx="19.44" ry="24.72" fill="#7d7d7d"/>
<ellipse cx="31.74" cy="0" rx="17.48" ry="22.23" fill="#7e7e7e"/>
<ellipse cx="32.45" cy="0" rx="15.22" ry="19.35" fill="#808080"/>
<ellipse cx="33.16" cy="0" rx="12.49" ry="15.88" fill="#828282"/>
<ellipse cx="33.87" cy="0" rx="8.88" ry="11.29" fill="#848484"/>
<ellipse cx="34.58" cy="0" rx="0.01" ry="0.01" fill="#868686"/>
</g>
<g transform="translate(482.0,350.3) rotate(-67.50)">
<ellipse cx="15.10" cy="0" rx="29.89" ry="31.62" fill="#fff" fill-opacity="0.003"/>
<ellipse cx="15.35" cy="0" rx="28.78" ry="30.45" fill="#fff" fill-opacity="0.002"/>
<ellipse cx="15.59" cy="0" rx="27.66" ry="29.27" fill="#fff" fill-opacity="0.003"/>
<ellipse cx="15.83" cy="0" rx="26.53" ry="28.07" fill="#fff" fill-opacity="0.004"/>
<ellipse cx="16.05" cy="0" rx="25.38" ry="26.85" fill="#fff" fill-opacity="0.005"/>
<ellipse cx="16.27" cy="0" rx="24.21" ry="25.61" fill="#fff" fill-opacity="0.007"/>
<ellipse cx="16.47" cy="0" rx="23.02" ry="24.36" fill="#fff" fill-opacity="0.010"/>
<ellipse cx="16.67" cy="0" rx="21.82" ry="23.09" fill="#fff" fill-opacity="0.013"/>
<ellipse cx="16.85" cy="0" rx="20.61" ry="21.81" fill="#fff" fill-opacity="0.017"/>
<ellipse cx="17.02" cy="0" rx="19.39" ry="20.51" fill="#fff" fill-opacity="0.022"/>
<ellipse cx="17.18" cy="0" rx="18.15" ry="19.20" fill="#fff" fill-opacity="0.028"/>
<ellipse cx="17.33" cy="0" rx="16.90" ry="17.88" fill="#fff" fill-opacity="0.034"/>
<ellipse cx="17.48" cy="0" rx="15.64" ry="16.55" fill="#fff" fill-opacity="0.041"/>
<ellipse cx="17.61" cy="0" rx="14.37" ry="15.21" fill="#fff" fill-opacity="0.049"/>
<ellipse cx="17.72" cy="0" rx="13.09" ry="13.85" fill="#fff" fill-opacity="0.057"/>
<ellipse cx="17.83" cy="0" rx="11.81" ry="12.49" fill="#fff" fill-opacity="0.065"/>
<ellipse cx="17.93" cy="0" rx="10.52" ry="11.13" fill="#fff" fill-opacity="0.072"/>
<ellipse cx="18.01" cy="0" rx="9.22" ry="9.75" fill="#fff" fill-opacity="0.079"/>
<ellipse cx="18.09" cy="0" rx="7.91" ry="8.37" fill="#fff" fill-opacity="0.084"/>
<ellipse cx="18.15" cy="0" rx="6.60" ry="6.98" fill="#fff" fill-opacity="0.086"/>
<ellipse cx="18.20" cy="0" rx="5.28" ry="5.59" fill="#fff" fill-opacity="0.083"/>
<ellipse cx="18.24" cy="0" rx="3.97" ry="4.20" fill="#fff" fill-opacity="0.076"/>
<ellipse cx="18.27" cy="0" rx="2.65" ry="2.80" fill="#fff" fill-opacity="0.062"/>
<ellipse cx="18.29" cy="0" rx="1.32" ry="1.40" fill="#fff" fill-opacity="0.041"/>
<ellipse cx="18.29" cy="0" rx="0.30" ry="0.30" fill="#fff" fill-opacity="0.014"/>
</g>
</g>

  <!-- bond C-H3 (toward viewer) -->
  <path d="M443.4 360.6 Q452 355.4 459.8 361.8 Q465.4 369 462.4 376.4 Q459.4 382 454.5 382.4 Z" fill="url(#b3D)"/>
  <path d="M441.8 364.8 L444.4 363 Q453.6 368.6 455.4 380.6 L452.8 382 Z" fill="#d2d2d2"/>
  <!-- H3 lower-left -->
  <clipPath id="cph3"><circle cx="412.0" cy="396.0" r="42.6"/></clipPath>
<g clip-path="url(#cph3)">
<circle cx="412.0" cy="396.0" r="43.6" fill="#2e2e2e"/>
<g transform="translate(412.0,396.0) rotate(-80.72)">
<ellipse cx="-7.15" cy="0" rx="35.02" ry="39.91" fill="#2e2e2e"/><rect x="-31.10" y="-43.6" width="75.70" height="87.2" fill="#2e2e2e"/>
<ellipse cx="-6.66" cy="0" rx="35.35" ry="40.27" fill="#343434"/><rect x="-28.96" y="-43.6" width="73.56" height="87.2" fill="#343434"/>
<ellipse cx="-6.16" cy="0" rx="35.64" ry="40.61" fill="#383838"/><rect x="-26.82" y="-43.6" width="71.42" height="87.2" fill="#383838"/>
<ellipse cx="-5.67" cy="0" rx="35.92" ry="40.92" fill="#3c3c3c"/><rect x="-24.68" y="-43.6" width="69.28" height="87.2" fill="#3c3c3c"/>
<ellipse cx="-5.18" cy="0" rx="36.16" ry="41.21" fill="#404040"/><rect x="-22.53" y="-43.6" width="67.13" height="87.2" fill="#404040"/>
<ellipse cx="-4.69" cy="0" rx="36.39" ry="41.46" fill="#444444"/><rect x="-20.39" y="-43.6" width="64.99" height="87.2" fill="#444444"/>
<ellipse cx="-4.19" cy="0" rx="36.59" ry="41.69" fill="#484848"/><rect x="-18.25" y="-43.6" width="62.85" height="87.2" fill="#484848"/>
<ellipse cx="-3.70" cy="0" rx="36.77" ry="41.89" fill="#4b4b4b"/><rect x="-16.11" y="-43.6" width="60.71" height="87.2" fill="#4b4b4b"/>
<ellipse cx="-3.21" cy="0" rx="36.92" ry="42.07" fill="#4e4e4e"/><rect x="-13.96" y="-43.6" width="58.56" height="87.2" fill="#4e4e4e"/>
<ellipse cx="-2.72" cy="0" rx="37.05" ry="42.22" fill="#525252"/><rect x="-11.82" y="-43.6" width="56.42" height="87.2" fill="#525252"/>
<ellipse cx="-2.22" cy="0" rx="37.16" ry="42.35" fill="#555555"/><rect x="-9.68" y="-43.6" width="54.28" height="87.2" fill="#555555"/>
<ellipse cx="-1.73" cy="0" rx="37.25" ry="42.45" fill="#585858"/><rect x="-7.54" y="-43.6" width="52.14" height="87.2" fill="#585858"/>
<ellipse cx="-1.24" cy="0" rx="37.32" ry="42.52" fill="#5b5b5b"/><rect x="-5.40" y="-43.6" width="50.00" height="87.2" fill="#5b5b5b"/>
<ellipse cx="-0.75" cy="0" rx="37.36" ry="42.57" fill="#5e5e5e"/><rect x="-3.25" y="-43.6" width="47.85" height="87.2" fill="#5e5e5e"/>
<ellipse cx="-0.26" cy="0" rx="37.38" ry="42.60" fill="#616161"/><rect x="-1.11" y="-43.6" width="45.71" height="87.2" fill="#616161"/>
<ellipse cx="0.24" cy="0" rx="37.38" ry="42.60" fill="#646464"/><rect x="1.03" y="-43.6" width="43.57" height="87.2" fill="#646464"/>
<ellipse cx="0.73" cy="0" rx="37.36" ry="42.57" fill="#676767"/><rect x="3.17" y="-43.6" width="41.43" height="87.2" fill="#676767"/>
<ellipse cx="1.22" cy="0" rx="37.32" ry="42.52" fill="#6a6a6a"/><rect x="5.32" y="-43.6" width="39.28" height="87.2" fill="#6a6a6a"/>
<ellipse cx="1.71" cy="0" rx="37.25" ry="42.45" fill="#6d6d6d"/><rect x="7.46" y="-43.6" width="37.14" height="87.2" fill="#6d6d6d"/>
<ellipse cx="2.21" cy="0" rx="37.17" ry="42.35" fill="#707070"/><rect x="9.60" y="-43.6" width="35.00" height="87.2" fill="#707070"/>
<ellipse cx="2.70" cy="0" rx="37.06" ry="42.23" fill="#737373"/><rect x="11.74" y="-43.6" width="32.86" height="87.2" fill="#737373"/>
<ellipse cx="3.19" cy="0" rx="36.93" ry="42.08" fill="#767676"/><rect x="13.89" y="-43.6" width="30.71" height="87.2" fill="#767676"/>
<ellipse cx="3.68" cy="0" rx="36.77" ry="41.90" fill="#797979"/><rect x="16.03" y="-43.6" width="28.57" height="87.2" fill="#797979"/>
<ellipse cx="4.18" cy="0" rx="36.60" ry="41.70" fill="#7b7b7b"/><rect x="18.17" y="-43.6" width="26.43" height="87.2" fill="#7b7b7b"/>
<ellipse cx="4.67" cy="0" rx="36.40" ry="41.47" fill="#7e7e7e"/><rect x="20.31" y="-43.6" width="24.29" height="87.2" fill="#7e7e7e"/>
<ellipse cx="5.16" cy="0" rx="36.17" ry="41.22" fill="#818181"/><rect x="22.45" y="-43.6" width="22.15" height="87.2" fill="#818181"/>
<ellipse cx="5.65" cy="0" rx="35.93" ry="40.94" fill="#848484"/><rect x="24.60" y="-43.6" width="20.00" height="87.2" fill="#848484"/>
<ellipse cx="6.14" cy="0" rx="35.65" ry="40.63" fill="#868686"/><rect x="26.74" y="-43.6" width="17.86" height="87.2" fill="#868686"/>
<ellipse cx="6.64" cy="0" rx="35.36" ry="40.29" fill="#898989"/><rect x="28.88" y="-43.6" width="15.72" height="87.2" fill="#898989"/>
<ellipse cx="7.13" cy="0" rx="35.03" ry="39.92" fill="#8c8c8c"/><rect x="31.02" y="-43.6" width="13.58" height="87.2" fill="#8c8c8c"/>
<ellipse cx="7.62" cy="0" rx="34.69" ry="39.52" fill="#8e8e8e"/><rect x="33.17" y="-43.6" width="11.43" height="87.2" fill="#8e8e8e"/>
<ellipse cx="8.11" cy="0" rx="34.31" ry="39.09" fill="#919191"/><rect x="35.31" y="-43.6" width="9.29" height="87.2" fill="#919191"/>
<ellipse cx="8.61" cy="0" rx="33.90" ry="38.63" fill="#939393"/><rect x="37.45" y="-43.6" width="7.15" height="87.2" fill="#939393"/>
<ellipse cx="9.10" cy="0" rx="33.47" ry="38.14" fill="#969696"/><rect x="39.59" y="-43.6" width="5.01" height="87.2" fill="#969696"/>
<ellipse cx="9.59" cy="0" rx="33.01" ry="37.61" fill="#999999"/><rect x="41.74" y="-43.6" width="2.86" height="87.2" fill="#999999"/>
<ellipse cx="10.08" cy="0" rx="32.51" ry="37.05" fill="#9b9b9b"/>
<ellipse cx="10.58" cy="0" rx="31.98" ry="36.44" fill="#9e9e9e"/>
<ellipse cx="11.07" cy="0" rx="31.42" ry="35.80" fill="#a0a0a0"/>
<ellipse cx="11.56" cy="0" rx="30.82" ry="35.12" fill="#a3a3a3"/>
<ellipse cx="12.05" cy="0" rx="30.18" ry="34.39" fill="#a5a5a5"/>
<ellipse cx="12.54" cy="0" rx="29.50" ry="33.61" fill="#a8a8a8"/>
<ellipse cx="13.04" cy="0" rx="28.78" ry="32.79" fill="#aaaaaa"/>
<ellipse cx="13.53" cy="0" rx="28.00" ry="31.91" fill="#adadad"/>
<ellipse cx="14.02" cy="0" rx="27.18" ry="30.97" fill="#afafaf"/>
<ellipse cx="14.51" cy="0" rx="26.30" ry="29.97" fill="#b2b2b2"/>
<ellipse cx="15.01" cy="0" rx="25.36" ry="28.89" fill="#b4b4b4"/>
<ellipse cx="15.50" cy="0" rx="24.35" ry="27.74" fill="#b7b7b7"/>
<ellipse cx="15.99" cy="0" rx="23.25" ry="26.50" fill="#b9b9b9"/>
<ellipse cx="16.48" cy="0" rx="22.07" ry="25.15" fill="#bbbbbb"/>
<ellipse cx="16.97" cy="0" rx="20.78" ry="23.68" fill="#bebebe"/>
<ellipse cx="17.47" cy="0" rx="19.37" ry="22.07" fill="#c0c0c0"/>
<ellipse cx="17.96" cy="0" rx="17.79" ry="20.28" fill="#c3c3c3"/>
<ellipse cx="18.45" cy="0" rx="16.02" ry="18.25" fill="#c5c5c5"/>
<ellipse cx="18.94" cy="0" rx="13.96" ry="15.91" fill="#c7c7c7"/>
<ellipse cx="19.44" cy="0" rx="11.47" ry="13.07" fill="#cacaca"/>
<ellipse cx="19.93" cy="0" rx="8.16" ry="9.30" fill="#cccccc"/>
<ellipse cx="20.42" cy="0" rx="0.01" ry="0.01" fill="#cfcfcf"/>
</g>
<g transform="translate(412.0,396.0) rotate(-80.72)">
<ellipse cx="8.70" cy="0" rx="23.31" ry="24.05" fill="#fff" fill-opacity="0.009"/>
<ellipse cx="8.84" cy="0" rx="22.45" ry="23.17" fill="#fff" fill-opacity="0.006"/>
<ellipse cx="8.98" cy="0" rx="21.57" ry="22.27" fill="#fff" fill-opacity="0.009"/>
<ellipse cx="9.12" cy="0" rx="20.69" ry="21.35" fill="#fff" fill-opacity="0.014"/>
<ellipse cx="9.25" cy="0" rx="19.79" ry="20.42" fill="#fff" fill-opacity="0.021"/>
<ellipse cx="9.37" cy="0" rx="18.88" ry="19.48" fill="#fff" fill-opacity="0.031"/>
<ellipse cx="9.49" cy="0" rx="17.95" ry="18.53" fill="#fff" fill-opacity="0.044"/>
<ellipse cx="9.60" cy="0" rx="17.02" ry="17.56" fill="#fff" fill-opacity="0.062"/>
<ellipse cx="9.71" cy="0" rx="16.07" ry="16.59" fill="#fff" fill-opacity="0.086"/>
<ellipse cx="9.81" cy="0" rx="15.12" ry="15.60" fill="#fff" fill-opacity="0.121"/>
<ellipse cx="9.90" cy="0" rx="14.15" ry="14.61" fill="#fff" fill-opacity="0.171"/>
<ellipse cx="9.99" cy="0" rx="13.18" ry="13.60" fill="#fff" fill-opacity="0.251"/>
<ellipse cx="10.07" cy="0" rx="12.20" ry="12.59" fill="#fff" fill-opacity="0.398"/>
<ellipse cx="10.14" cy="0" rx="11.21" ry="11.57" fill="#fff" fill-opacity="0.763"/>
<ellipse cx="10.21" cy="0" rx="10.21" ry="10.54" fill="#fff" fill-opacity="1.000"/>
</g>
</g>

</g>
<!-- axes -->
<g filter="url(#ab)">
  <path d="M282.6 591.6 L278 606.5" stroke="#801212" stroke-width="2.8"/>
  <ellipse cx="277.7" cy="608" rx="5.3" ry="3.6" fill="none" stroke="#e62020" stroke-width="2.1"/>
  <path d="M283 591.8 L271.2 570.8 L266 573.6 L269 580.5 Z" fill="#1616e0"/>
  <path d="M283 590.3 L263.8 594.4 L263 592.4 L253 600.6 L265 602.8 L264.6 599.8 L283.3 594.6 Z" fill="#22e222"/>
</g>
</svg>
<div class="t" style="left:24.70px;top:6.52px;font-size:11.2px;color:#161616;transform:scaleX(1.0225);">untitled.cml* - Avogadro</div>
<div class="t" style="left:4.70px;top:30.01px;font-size:10.5px;color:#161616;transform:scaleX(1.0296);">File</div>
<div class="t" style="left:36.90px;top:30.01px;font-size:10.5px;color:#161616;transform:scaleX(0.9949);">Edit</div>
<div class="t" style="left:70.10px;top:30.01px;font-size:10.5px;color:#161616;transform:scaleX(0.9841);">View</div>
<div class="t" style="left:107.70px;top:30.01px;font-size:10.5px;color:#161616;transform:scaleX(1.0702);">Build</div>
<div class="t" style="left:146.70px;top:30.01px;font-size:10.5px;color:#161616;transform:scaleX(0.9873);">Select</div>
<div class="t" style="left:189.90px;top:30.01px;font-size:10.5px;color:#161616;transform:scaleX(1.0046);">Extensions</div>
<div class="t" style="left:255.30px;top:30.01px;font-size:10.5px;color:#161616;transform:scaleX(1.0446);">Crystallography</div>
<div class="t" style="left:346.70px;top:30.01px;font-size:10.5px;color:#161616;transform:scaleX(1.0067);">Settings</div>
<div class="t" style="left:400.70px;top:30.01px;font-size:10.5px;color:#161616;transform:scaleX(1.0951);">Help</div>
<div class="t" style="left:29.50px;top:52.54px;font-size:10px;color:#161616;transform:scaleX(0.9992);">New</div>
<div class="t" style="left:79.70px;top:52.54px;font-size:10px;color:#161616;transform:scaleX(0.9809);">Open</div>
<div class="t" style="left:133.90px;top:52.54px;font-size:10px;color:#161616;transform:scaleX(1.0110);">Save</div>
<div class="t" style="left:186.90px;top:52.54px;font-size:10px;color:#161616;transform:scaleX(0.9306);">Close</div>
<div class="t" style="left:240.50px;top:52.54px;font-size:10px;color:#161616;transform:scaleX(1.0167);">Quit</div>
<div class="t" style="left:475.50px;top:52.74px;font-size:10px;color:#161616;transform:scaleX(1.0123);">Tool Settings...</div>
<div class="t" style="left:549.70px;top:52.74px;font-size:10px;color:#161616;transform:scaleX(1.0121);">Display Settings...</div>
<div class="t" style="left:-1.70px;top:75.73px;font-size:10px;color:#161616;transform:scaleX(0.9763);">Display Types</div>
<div class="t" style="left:-1.70px;top:249.13px;font-size:10px;color:#161616;transform:scaleX(1.0105);">Navigate Settings</div>
<div class="t" style="left:27.50px;top:102.73px;font-size:10px;color:#161616;transform:scaleX(1.0447);">Axes</div>
<div class="t" style="left:26.50px;top:118.33px;font-size:10px;color:#161616;transform:scaleX(1.0694);">Ball and Stick</div>
<div class="t" style="left:27.50px;top:133.94px;font-size:10px;color:#161616;transform:scaleX(1.0849);">Cartoon</div>
<div class="t" style="left:26.50px;top:149.53px;font-size:10px;color:#161616;transform:scaleX(1.1284);">Dipole</div>
<div class="t" style="left:26.50px;top:165.13px;font-size:10px;color:#161616;transform:scaleX(1.0562);">Force</div>
<div class="t" style="left:26.50px;top:180.73px;font-size:10px;color:#161616;transform:scaleX(1.1167);">Hydrogen Bond</div>
<div class="t" style="left:26.50px;top:196.33px;font-size:10px;color:#161616;transform:scaleX(1.0235);">Label</div>
<div class="t" style="left:31.50px;top:216.94px;font-size:10px;color:#161616;transform:scaleX(1.0235);">Add</div>
<div class="t" style="left:93.10px;top:216.94px;font-size:10px;color:#161616;transform:scaleX(0.9881);">Duplicate</div>
<div class="t" style="left:170.30px;top:216.94px;font-size:10px;color:#161616;transform:scaleX(0.9773);">Remove</div>
<div class="t" style="left:22.30px;top:275.74px;font-size:10px;color:#161616;transform:scaleX(0.9666);">Display visual cues</div>
<div class="t" style="left:254.90px;top:84.03px;font-size:10px;color:#161616;transform:scaleX(0.9651);">View 1</div>
<div class="abs" style="left:0;top:205px;width:240px;height:6px;background:#f0f0f0;"></div>
<div class="abs" style="left:7px;top:204px;width:217px;height:1px;background:#82878f;"></div>
</body>
</html>
